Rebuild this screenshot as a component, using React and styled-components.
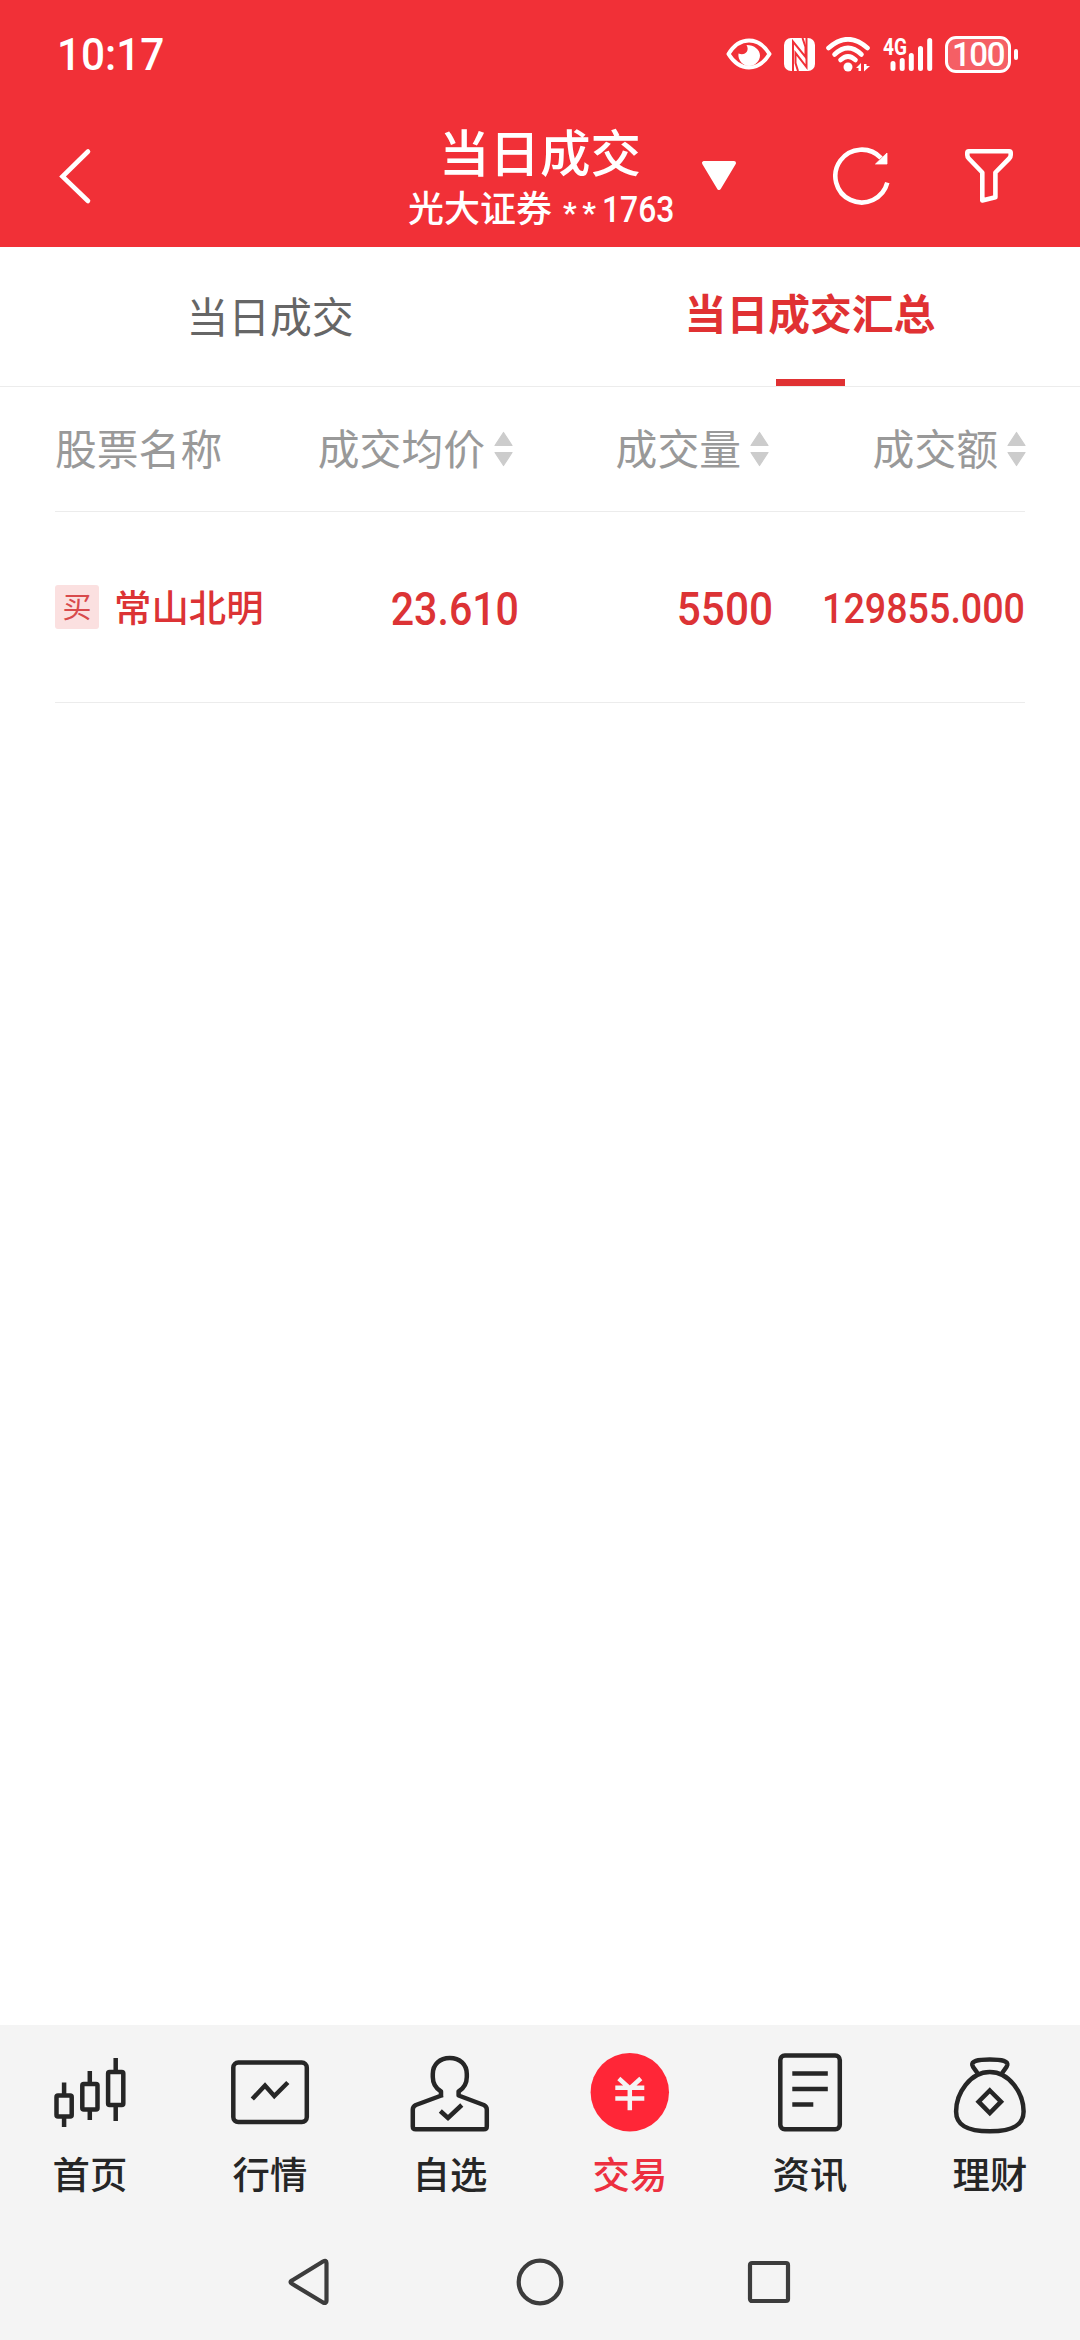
import { useState } from "react";
import styled, { createGlobalStyle } from "styled-components";

const GlobalStyle = createGlobalStyle`
    *{ box-sizing:border-box; }
    body{
        margin:0;
        background-color:#fff;
        font-family:Roboto, "Noto Sans CJK SC", sans-serif;
    }
    svg{
        display:block;
        flex-shrink:0;
    }
`;

const Screen = styled.div`
    display:flex;
    flex-direction:column;
    width:1080px;
    height:2340px;
    overflow:hidden;
    background-color:#fff;
`;
const StatusBar = styled.div`
    display:flex;
    align-items:center;
    justify-content:space-between;
    height:108px;
    padding:0 62px 0 57px;
    background-color:#f13037;
    color:#fff;
`;
const Clock = styled.span`
    padding-top:2px;
    font-size:45px;
    font-weight:500;
    line-height:54px;
    transform:scaleX(0.94);
    transform-origin:left center;
`;
const StatusIcons = styled.div`
    display:flex;
    align-items:center;
`;
const Battery = styled.div`
    display:flex;
    align-items:center;
    justify-content:center;
    width:66px;
    height:37px;
    margin-left:12px;
    padding-top:1px;
    border:3px solid #fff;
    border-radius:11px;
    background-color:#f55f65;
    font-size:33px;
    font-weight:500;
    line-height:1;
    letter-spacing:-1.4px;
`;
const BatteryCap = styled.div`
    width:4px;
    height:11px;
    margin-left:3px;
    border-radius:2px;
    background-color:#fff;
`;
const Header = styled.header`
    display:grid;
    grid-template-columns:390px 300px 390px;
    height:139px;
    background-color:#f13037;
    color:#fff;
`;
const BackButton = styled.div`
    padding:40px 0 0 58px;
`;
const TitleBox = styled.div`
    display:flex;
    flex-direction:column;
    align-items:center;
    padding-top:16px;
    white-space:nowrap;
`;
const Title = styled.h1`
    margin:0;
    font-size:50.5px;
    font-weight:500;
    line-height:62px;
`;
const Account = styled.div`
    display:flex;
    font-size:36px;
    font-weight:500;
    line-height:48px;
`;
const Stars = styled.span`
    width:39px;
    margin-left:11px;
    padding-top:3px;
    font-size:30px;
    font-weight:700;
    letter-spacing:5.6px;
`;
const Digits = styled.span`
    width:70px;
    font-size:37px;
    transform:scaleX(0.86);
    transform-origin:left center;
`;
const HeaderActions = styled.div`
    display:flex;
    align-items:flex-start;
    padding:37px 0 0 10px;
`;
const Action = styled.div`
    margin:${(props) => props.$margin};
`;
const Tabs = styled.nav`
    display:flex;
    height:140px;
    border-bottom:1px solid #ececec;
`;
const Tab = styled.div`
    display:flex;
    flex:1;
    flex-direction:column;
    align-items:center;
    justify-content:space-between;
    padding-top:${(props) => (props.$active ? 39 : 42)}px;
    font-size:41.8px;
    font-weight:${(props) => (props.$active ? 700 : 400)};
    line-height:60px;
    color:${(props) => (props.$active ? "#e03133" : "#666")};
`;
const TabLine = styled.div`
    width:69px;
    height:7px;
    background-color:#e03133;
`;
const Table = styled.main`
    flex:1;
    padding:0 55px;
`;
const HeadRow = styled.div`
    display:grid;
    grid-template-columns:200px 258px 256px 257px;
    align-items:center;
    height:125px;
    border-bottom:1px solid #ececec;
    font-size:41.8px;
    line-height:60px;
    color:#999;
`;
const HeadCell = styled.div`
    display:flex;
    align-items:center;
    justify-content:${(props) => (props.$left ? "flex-start" : "flex-end")};
    gap:9px;
    white-space:nowrap;
`;
const Label = styled.span`
    padding-top:3px;
`;
const Row = styled.div`
    display:grid;
    grid-template-columns:220px 244px 254px 252px;
    align-items:center;
    height:191px;
    border-bottom:1px solid #ececec;
    font-weight:500;
    color:#dc3335;
`;
const Stock = styled.div`
    display:flex;
    align-items:center;
    gap:15px;
    font-size:37.4px;
    line-height:44px;
    white-space:nowrap;
`;
const Badge = styled.span`
    display:flex;
    align-items:center;
    justify-content:center;
    width:44px;
    height:44px;
    padding-top:2px;
    border-radius:3px;
    background-color:#fbe0e0;
    font-size:29px;
    font-weight:400;
    line-height:1;
    color:#d84a4c;
`;
const Value = styled.div`
    padding-top:2px;
    font-size:${(props) => props.$size || 47}px;
    font-weight:500;
    line-height:1;
    text-align:right;
    white-space:nowrap;
    transform:scaleX(${(props) => props.$scale || 0.875});
    transform-origin:right center;
`;
const BottomBar = styled.footer`
    height:315px;
    background-color:#f4f4f4;
`;
const Menu = styled.div`
    display:grid;
    grid-template-columns:repeat(6, 1fr);
    height:207px;
    padding-top:25px;
`;
const MenuItem = styled.div`
    display:flex;
    flex-direction:column;
    align-items:center;
    gap:18px;
    font-size:37.4px;
    font-weight:500;
    line-height:48px;
    color:${(props) => (props.$active ? "#ed2f3f" : "#262626")};
`;
const SystemBar = styled.div`
    display:flex;
    justify-content:space-between;
    padding:22px 286px 0;
`;

const EyeIcon = () => (
    <svg width="46" height="32" viewBox="0 0 46 32">
        <path d="M2.500 16C8 7 15 2.500 23 2.500S38 7 43.500 16C38 25 31 29.500 23 29.500S8 25 2.500 16Z" fill="none" stroke="#fff" strokeWidth="4" strokeLinejoin="round" />
        <path d="M20.500 7C24 13 19 18 12.500 15.500C11.500 22 17 28 23 28C29 28 34 23 34 17.500C34 12 28.500 7 20.500 7Z" fill="#fff" />
    </svg>
);

const NfcIcon = () => (
    <svg width="31" height="33" viewBox="0 0 31 33">
        <rect width="31" height="33" rx="7" fill="#fff" />
        <path d="M9 33V3.500L21.500 19V9L18.500 0" fill="none" stroke="#f13037" strokeWidth="2" />
        <path d="M22.500 0V29L11.500 15V25L14 33" fill="none" stroke="#f13037" strokeWidth="2" />
    </svg>
);

const WifiIcon = () => (
    <svg width="45" height="35" viewBox="0 0 45 35">
        <g fill="none" stroke="#fff" strokeWidth="4.600" strokeLinecap="round">
            <path d="M2.500 11Q22 -6.500 41.500 11" />
            <path d="M8.500 17.500Q22 4.500 35.500 17.500" />
            <path d="M14.500 23Q22 16 29.500 23" />
        </g>
        <circle cx="22" cy="30" r="4.500" fill="#fff" />
        <path d="M30 31L35 26V34H32.500V31ZM38 27H40.500V29H44L38 34.500Z" fill="#fff" />
    </svg>
);

const SignalIcon = () => (
    <svg width="50" height="50" viewBox="0 -8 50 50">
        <text x="0" y="17.500" textLength="24" lengthAdjust="spacingAndGlyphs" fill="#fff" fontSize="23.500" fontWeight="700">4G</text>
        <g stroke="#fff" strokeWidth="5" strokeLinecap="round">
            <path d="M10 26.500V31.500M19.200 23.500V31.500M28.300 18.500V31.500M37.500 11.500V31.500M46.700 3.500V31.500" />
        </g>
    </svg>
);

const BackIcon = () => (
    <svg width="34" height="58" viewBox="0 0 34 58">
        <path d="M30 3.500L4.500 28.500L30 53" fill="none" stroke="#fff" strokeWidth="4.600" strokeLinecap="round" strokeLinejoin="miter" />
    </svg>
);

const CaretIcon = () => (
    <svg width="37" height="31" viewBox="0 0 37 31">
        <path d="M4 3H34L19 28Z" fill="#fff" stroke="#fff" strokeWidth="4" strokeLinejoin="round" />
    </svg>
);

const RefreshIcon = () => (
    <svg width="58" height="60" viewBox="0 0 58 60">
        <path d="M55.300 36.700A26.400 26.400 0 1 1 49 12" fill="none" stroke="#fff" strokeWidth="4.600" />
        <path d="M55 7V18H43.500Z" fill="#fff" stroke="#fff" strokeWidth="0.800" />
    </svg>
);

const FilterIcon = () => (
    <svg width="50" height="58" viewBox="0 0 50 58">
        <path d="M4.800 4.300H45.200Q46.700 4.300 46.700 5.800V8Q46.700 10 45.200 11.500L31.400 25.500V50.200L18.300 53.500V25.500L4.800 11.500Q3.300 10 3.300 8V5.800Q3.300 4.300 4.800 4.300Z" fill="none" stroke="#fff" strokeWidth="4.600" strokeLinejoin="round" />
    </svg>
);

const SortIcon = () => (
    <svg width="19" height="36" viewBox="0 0 19 36">
        <path d="M9.500 1.500L18 14.500H1ZM9.500 34.500L18 21.500H1Z" fill="#ccc" stroke="#ccc" strokeWidth="1.200" strokeLinejoin="round" />
    </svg>
);

const iconProps = { width: 84, height: 84, viewBox: "-0.3 0 84 84", fill: "none", stroke: "#262626", strokeWidth: 4.5 };

const HomeIcon = () => (
    <svg {...iconProps}>
        <rect x="8.200" y="45.500" width="15.200" height="21" rx="1.500" />
        <rect x="34" y="34" width="15.200" height="25.500" rx="1.500" />
        <rect x="59.800" y="22" width="15.200" height="33" rx="1.500" />
        <path d="M15.800 32.500V45M15.800 67V77M41.500 21V33M41.500 60V70M67.400 8V21M67.400 55V71" />
    </svg>
);

const MarketIcon = () => (
    <svg {...iconProps}>
        <rect x="5" y="12.600" width="73.500" height="59.500" rx="5" />
        <path d="M24 49L36.700 35.500L46 46L59.500 32.500" />
    </svg>
);

const WatchIcon = () => (
    <svg {...iconProps} strokeLinejoin="round">
        <path d="M32.700 47.500V41.500C27 38 24.500 33.500 24.500 27V24C24.500 14.500 31.500 8 41.500 8S58.500 14.500 58.500 24V27C58.500 33.500 56 38 50.300 41.500V45.500L75.500 55Q78.500 56.500 78.500 59.500V76.500Q78.500 79.300 75.500 79.300H7.500Q4.500 79.300 4.500 76.500V59.500Q4.500 56.500 7.500 55L34.500 45" />
        <path d="M32 61L39.700 68L53.500 55" strokeLinejoin="miter" />
    </svg>
);

const TradeIcon = () => (
    <svg {...iconProps} stroke="#f4f4f4">
        <circle cx="41.500" cy="42.300" r="39.200" fill="#ff2637" stroke="none" />
        <path d="M30.500 28.500L41.500 38.500L52.500 28.500M27 37.800H56M27 48.500H56M41.500 38V60.300" />
    </svg>
);

const NewsIcon = () => (
    <svg {...iconProps}>
        <rect x="12" y="5.500" width="59.500" height="73.800" rx="4.500" />
        <path d="M24 23.500H59.500M24 39H59.500M24 54.500H45" />
    </svg>
);

const WealthIcon = () => (
    <svg {...iconProps} strokeLinejoin="round">
        <path d="M41.500 22C22 22 7.800 43 7.800 61.500C7.800 75 18 81.300 41.500 81.300S75.300 75 75.300 61.500C75.300 43 61 22 41.500 22Z" />
        <path d="M30 25C28.500 20.500 24.500 18 24 15C23.500 11.500 28 9.500 41.500 9.500S59.500 11.500 59 15C58.500 18 54.500 20.500 53 25" />
        <path d="M41.500 40.500L52.700 51.700L41.500 63L30.300 51.700Z" strokeLinejoin="miter" />
    </svg>
);

const tabs = ["当日成交", "当日成交汇总"];
const columns = ["成交均价", "成交量", "成交额"];
const deals = [
    { side: "买", name: "常山北明", price: "23.610", volume: "5500", amount: "129855.000" },
];
const menu = [
    { label: "首页", Icon: HomeIcon },
    { label: "行情", Icon: MarketIcon },
    { label: "自选", Icon: WatchIcon },
    { label: "交易", Icon: TradeIcon },
    { label: "资讯", Icon: NewsIcon },
    { label: "理财", Icon: WealthIcon },
];

const App = () => {
    const [tab, setTab] = useState(1);
    const current = "交易";

    return (
    <Screen>
        <GlobalStyle />
        <StatusBar>
            <Clock>10:17</Clock>
            <StatusIcons>
                <EyeIcon />
                <Action $margin="0 0 0 12px"><NfcIcon /></Action>
                <Action $margin="0 0 0 11px"><WifiIcon /></Action>
                <Action $margin="0 0 0 12px"><SignalIcon /></Action>
                <Battery>100</Battery>
                <BatteryCap />
            </StatusIcons>
        </StatusBar>
        <Header>
            <BackButton><BackIcon /></BackButton>
            <TitleBox>
                <Title>当日成交</Title>
                <Account>
                    <span>光大证券</span>
                    <Stars>**</Stars>
                    <Digits>1763</Digits>
                </Account>
            </TitleBox>
            <HeaderActions>
                <Action $margin="15px 0 0 0"><CaretIcon /></Action>
                <Action $margin="1px 0 0 95px"><RefreshIcon /></Action>
                <Action $margin="2px 0 0 74px"><FilterIcon /></Action>
            </HeaderActions>
        </Header>
        <Tabs>
            {tabs.map((name, i) => (
                <Tab key={name} $active={tab === i} onClick={() => setTab(i)}>
                    {name}
                    {tab === i && <TabLine />}
                </Tab>
            ))}
        </Tabs>
        <Table>
            <HeadRow>
                <HeadCell $left><Label>股票名称</Label></HeadCell>
                {columns.map((name) => (
                    <HeadCell key={name}><Label>{name}</Label><SortIcon /></HeadCell>
                ))}
            </HeadRow>
            {deals.map((deal) => (
                <Row key={deal.name}>
                    <Stock><Badge>{deal.side}</Badge><Label>{deal.name}</Label></Stock>
                    <Value>{deal.price}</Value>
                    <Value $scale={0.9}>{deal.volume}</Value>
                    <Value $size={43}>{deal.amount}</Value>
                </Row>
            ))}
        </Table>
        <BottomBar>
            <Menu>
                {menu.map(({ label, Icon }) => (
                    <MenuItem key={label} $active={label === current}>
                        <Icon />
                        {label}
                    </MenuItem>
                ))}
            </Menu>
            <SystemBar>
                <svg width="50" height="56" viewBox="0 0 50 56" fill="none" stroke="#3c3c3c" strokeWidth="4.200" strokeLinejoin="round">
                    <path d="M6 26.500Q3 28 6 29.800L37 48.500Q40.500 50 40.500 47V9Q40.500 5.500 37 7.500Z" />
                </svg>
                <svg width="50" height="56" viewBox="0 0 50 56" fill="none" stroke="#3c3c3c" strokeWidth="4.200">
                    <circle cx="25" cy="28" r="21.300" />
                </svg>
                <svg width="50" height="56" viewBox="0 0 50 56" fill="none" stroke="#3c3c3c" strokeWidth="4.200">
                    <rect x="6" y="9" width="38" height="38" rx="2" />
                </svg>
            </SystemBar>
        </BottomBar>
    </Screen>
    );
};

export default App;
